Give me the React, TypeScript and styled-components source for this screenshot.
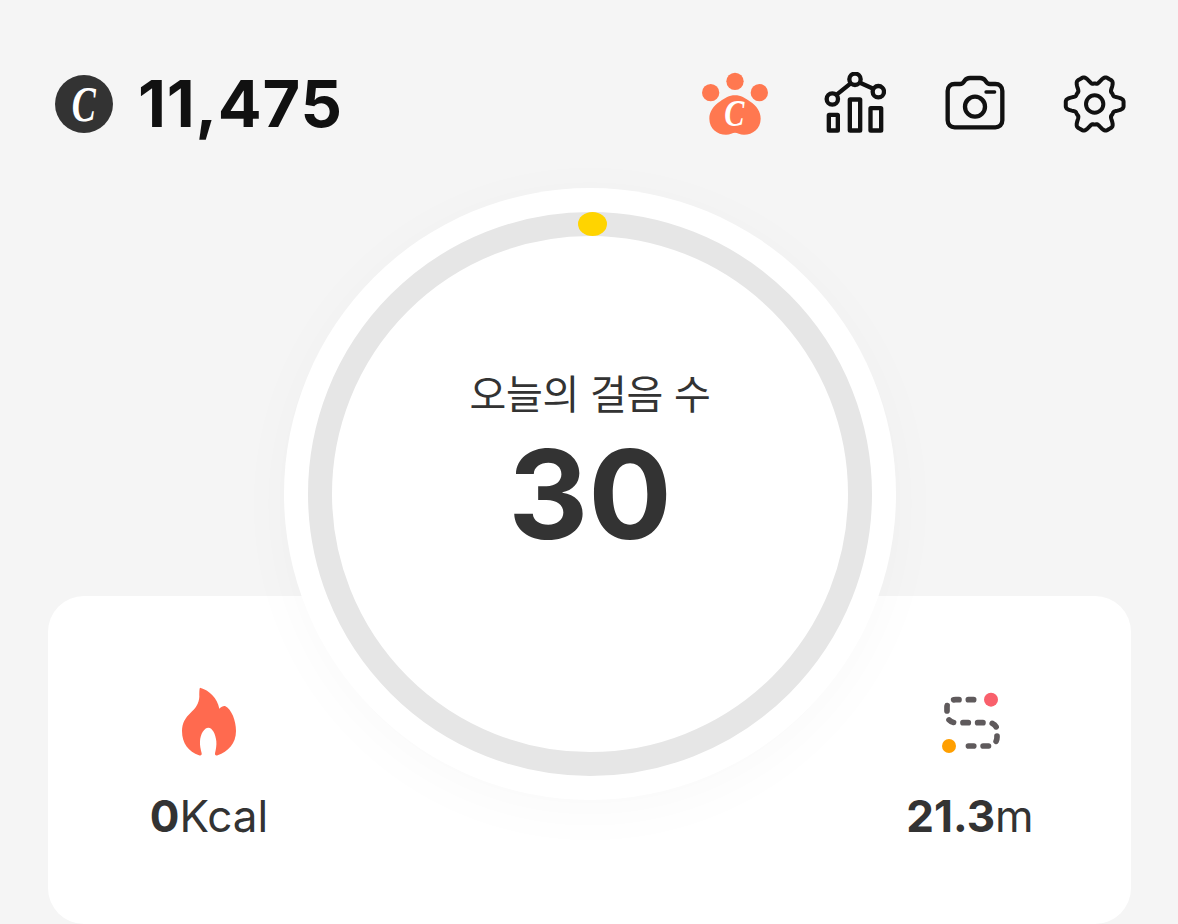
import React from "react";
import styled, { createGlobalStyle } from "styled-components";

const Global = createGlobalStyle`
  html, body { margin: 0; padding: 0; background: #f5f5f5; height: 100%; overflow: hidden; }
  body { font-family: Inter, "Noto Sans CJK KR", "Liberation Sans", sans-serif; color: #333; }
`;

const Page = styled.div`
  width: 1178px;
  height: 924px;
  overflow: hidden;
  background: #f5f5f5;
  display: flex;
  flex-direction: column;
`;

const Header = styled.header`
  display: flex;
  align-items: center;
  justify-content: space-between;
  height: 64px;
  margin-top: 72px;
  padding: 0 50px 0 55px;
`;

const Balance = styled.div`
  display: flex;
  align-items: center;
  gap: 25px;
`;

const Coin = styled.span`
  width: 58px;
  height: 58px;
  border-radius: 50%;
  background: #333;
  color: #fff;
  display: flex;
  align-items: center;
  justify-content: center;
`;

const CoinLetter = styled.span`
  display: block;
  font: italic 700 50px/50px "Liberation Serif", serif;
  transform: scaleX(0.72);
`;

const Amount = styled.span`
  font-size: 65px;
  font-weight: 700;
  color: #111;
  letter-spacing: 0.7px;
  line-height: 64px;
`;

const Tools = styled.nav`
  display: flex;
  align-items: center;
  gap: 56px;
`;

const ToolIcon = styled.svg<{ $w: number }>`
  width: ${(p) => p.$w}px;
  height: 64px;
  display: block;
  flex: none;
`;

const DialRow = styled.section`
  display: flex;
  justify-content: center;
  margin-top: 52px;
  padding-left: 2px;
  position: relative;
  z-index: 1;
`;

const Dial = styled.div`
  width: 612px;
  height: 612px;
  border-radius: 50%;
  background: #fff;
  box-shadow: 0 10px 60px rgba(0, 0, 0, 0.028);
  display: flex;
  align-items: center;
  justify-content: center;
  position: relative;
`;

const Track = styled.div`
  width: 564px;
  height: 564px;
  box-sizing: border-box;
  border-radius: 50%;
  border: 24px solid #e6e6e6;
  display: flex;
  flex-direction: column;
  align-items: center;
  justify-content: center;
`;

const Knob = styled.span`
  position: absolute;
  top: 24px;
  left: 294px;
  width: 29px;
  height: 24px;
  border-radius: 50%;
  background: #ffd400;
`;

const DialLabel = styled.div`
  font-size: 40px;
  line-height: 46px;
  font-weight: 400;
  color: #333;
  letter-spacing: -0.3px;
`;

const Steps = styled.div`
  font-size: 124px;
  line-height: 124px;
  font-weight: 700;
  color: #333;
  margin-top: 14px;
  margin-bottom: 60px;
`;

const Card = styled.section`
  height: 330px;
  margin: -204px 47px 0 48px;
  background: #fff;
  border-radius: 36px;
  display: flex;
  justify-content: space-between;
  padding: 90px 96px 0 96px;
  box-sizing: border-box;
`;

const Stat = styled.div`
  width: 130px;
  display: flex;
  flex-direction: column;
  align-items: center;
  gap: 34px;
`;

const StatValue = styled.div`
  font-size: 44px;
  line-height: 52px;
  font-weight: 400;
  color: #333;
  white-space: nowrap;
  b { font-weight: 700; }
`;

const StatIcon = styled.svg`
  width: 70px;
  height: 70px;
  display: block;
`;

const PawGlyph = styled.text`
  font: italic 700 116px "Liberation Serif", serif;
  fill: #fff;
`;

function gearPath() {
  const cx = 494;
  const cy = 132;
  const pts: string[] = [];
  for (let i = 0; i < 180; i++) {
    const a = (i / 180) * Math.PI * 2;
    const r = 74 + 15 * (Math.cos(6 * a) - 0.16 * Math.cos(18 * a));
    pts.push(`${(cx + r * Math.cos(a)).toFixed(1)} ${(cy + r * Math.sin(a)).toFixed(1)}`);
  }
  return `M${pts.join("L")}Z`;
}

export default function App() {
  return (
    <Page>
      <Global />
      <Header>
        <Balance>
          <Coin>
            <CoinLetter>C</CoinLetter>
          </Coin>
          <Amount>11,475</Amount>
        </Balance>
        <Tools>
          <ToolIcon $w={66} viewBox="36 36 198 192">
            <g fill="#ff7850">
              <circle cx="62" cy="98" r="26" />
              <circle cx="135" cy="64" r="26" />
              <circle cx="208" cy="98" r="26" />
              <path d="M135 106c18 0 30 8 44 18 22 14 33 32 33 52 0 30-24 48-50 48-12 0-20-6-27-6s-15 6-27 6c-26 0-50-18-50-48 0-20 11-38 33-52 14-10 26-18 44-18z" />
            </g>
            <PawGlyph transform="translate(133 198) scale(0.78 1)" textAnchor="middle">C</PawGlyph>
          </ToolIcon>
          <ToolIcon $w={62} viewBox="402 36 186 192" fill="none" stroke="#111" strokeWidth="13" strokeLinejoin="round">
            <path d="M440 104l42-34M510 68l40 18" />
            <circle cx="427" cy="117" r="17" />
            <circle cx="495" cy="58" r="17" />
            <circle cx="565" cy="95" r="17" />
            <rect x="416.5" y="164.5" width="27" height="47" rx="1" />
            <rect x="479.5" y="118.5" width="31" height="93" rx="1" />
            <rect x="541.5" y="144.5" width="32" height="67" rx="1" />
          </ToolIcon>
          <ToolIcon $w={64} viewBox="36 36 192 192" fill="none" stroke="#111" strokeWidth="13" strokeLinecap="round" strokeLinejoin="round">
            <path d="M74 72h16c8 0 10-4 14-10 4-6 8-8 16-8h30c8 0 12 2 16 8 4 6 6 10 14 10h16c12 0 21 8 21 21v88c0 13-9 21-21 21H74c-12 0-21-8-21-21V93c0-13 9-21 21-21z" />
            <circle cx="135" cy="140" r="30" />
            <path d="M168 96h26" strokeWidth="10" />
          </ToolIcon>
          <ToolIcon $w={66} viewBox="396 36 198 192" fill="none" stroke="#111" strokeWidth="12" strokeLinejoin="round">
            <path d={gearPath()} />
            <circle cx="494" cy="132" r="26" />
          </ToolIcon>
        </Tools>
      </Header>

      <DialRow>
        <Dial>
          <Track>
            <DialLabel>오늘의 걸음 수</DialLabel>
            <Steps>30</Steps>
          </Track>
          <Knob />
        </Dial>
      </DialRow>

      <Card>
        <Stat>
          <StatIcon viewBox="72 50 210 210">
            <path
              fill="#ff6a4f"
              d="M150 55c28 8 52 30 58 63 6-6 12-9 17-8 20 10 33 44 33 75 0 38-24 62-55 73-6 2-9-1-8-6 3-12 5-24 4-36-2-22-12-41-24-41s-24 19-25 41c-1 12 2 24 5 36 1 5-2 8-8 6-31-11-51-36-51-73 0-24 10-40 26-55 14-13 25-27 26-48 0-12 0-25 2-27z"
            />
          </StatIcon>
          <StatValue><b>0</b>Kcal</StatValue>
        </Stat>
        <Stat>
          <StatIcon viewBox="108 47 210 210">
            <path
              fill="none"
              stroke="#5f5a5c"
              strokeWidth="17"
              strokeLinecap="round"
              strokeDasharray="16 28"
              d="M224 88h-54c-14 0-26 8-26 22v22c0 14 10 25 26 25h98c16 0 26 10 26 24v20c0 16-12 26-28 26h-62"
            />
            <circle cx="276" cy="88" r="21" fill="#f9606c" />
            <circle cx="150" cy="227" r="21" fill="#ff9f00" />
          </StatIcon>
          <StatValue><b>21.3</b>m</StatValue>
        </Stat>
      </Card>
    </Page>
  );
}
